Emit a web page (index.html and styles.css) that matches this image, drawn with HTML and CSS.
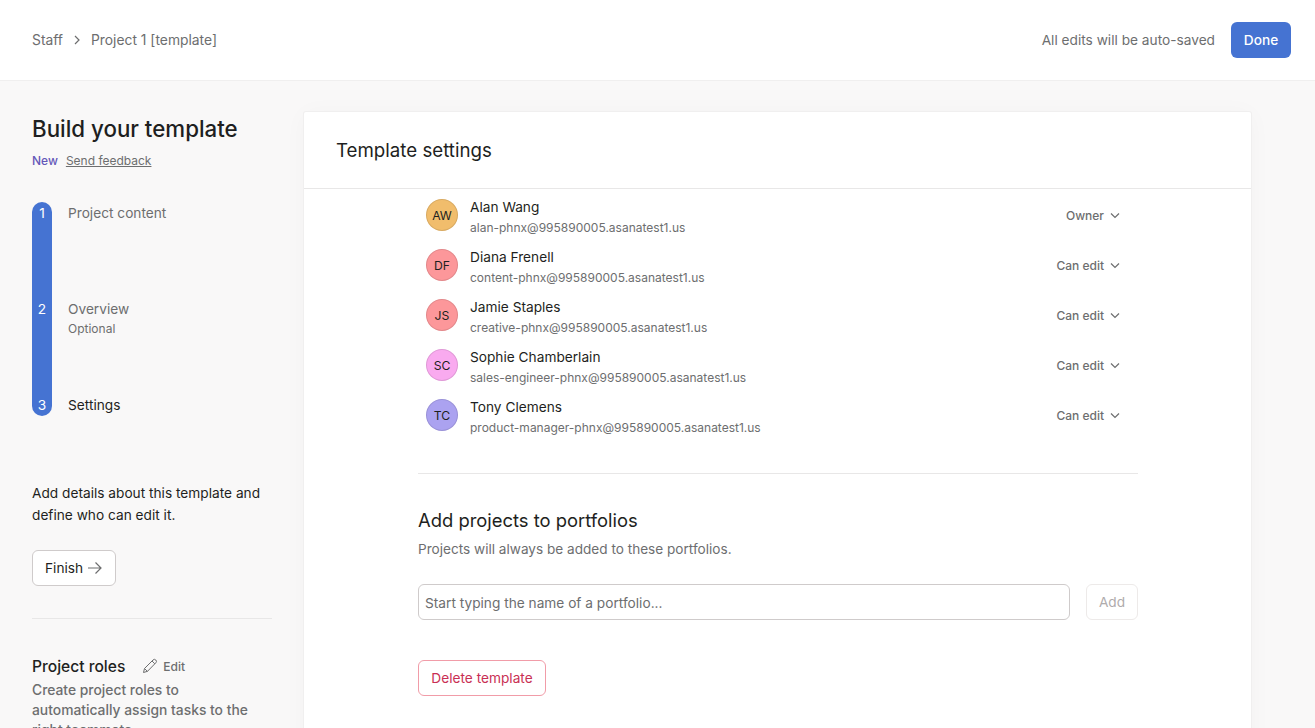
FILE: index.html
```html
<!DOCTYPE html>
<html lang="en">
<head>
<meta charset="utf-8">
<title>Project 1 [template]</title>
<link rel="stylesheet" href="styles.css">
</head>
<body>
<header class="topbar">
  <nav class="crumbs">
    <span>Staff</span>
    <svg class="crumb-icon" viewBox="0 0 10 10" width="10" height="10"><path d="M3 1l4 4-4 4" fill="none" stroke="#6d6e6f" stroke-width="1.2"/></svg>
    <span>Project 1 [template]</span>
  </nav>
  <div class="top-actions">
    <span>All edits will be auto-saved</span>
    <button class="btn-done">Done</button>
  </div>
</header>
<div class="main">
  <aside class="sidebar">
    <h1 class="side-title">Build your template</h1>
    <div class="side-meta"><span class="new">New</span><a class="feedback">Send feedback</a></div>
    <div class="stepper">
      <div class="track"><span>1</span><span>2</span><span>3</span></div>
      <div class="steps">
        <div class="step">Project content</div>
        <div class="step">Overview<small>Optional</small></div>
        <div class="step current">Settings</div>
      </div>
    </div>
    <p class="side-desc">Add details about this template and define who can edit it.</p>
    <button class="btn-finish">Finish
      <svg viewBox="0 0 16 16" width="16" height="16"><path d="M1 8h13M8.500 2.500L14 8l-5.500 5.500" fill="none" stroke="#6d6e6f" stroke-width="1.200"/></svg>
    </button>
    <hr class="side-rule">
    <div class="roles-head">
      <h2>Project roles</h2>
      <span class="edit">
        <svg viewBox="0 0 16 16" width="16" height="16"><path d="M1.500 14.500l1-4L11 2a1.800 1.800 0 0 1 2.800 2.800L5.500 13.300zM2.500 10.500l3 3M10 3l2.800 2.800" fill="none" stroke="#6d6e6f" stroke-width="1"/></svg>
        Edit
      </span>
    </div>
    <p class="roles-desc">Create project roles to automatically assign tasks to the right teammate</p>
  </aside>
  <section class="card">
    <h2 class="card-title">Template settings</h2>
    <div class="card-body">
      <ul class="members">
        <li class="member"><span class="avatar a-orange">AW</span><div class="who"><div class="name">Alan Wang</div><div class="mail">alan-phnx@995890005.asanatest1.us</div></div><span class="perm">Owner<svg viewBox="0 0 10 10" width="10" height="10"><path d="M1 3.500l4 4 4-4" fill="none" stroke="#6d6e6f" stroke-width="1.200"/></svg></span></li>
        <li class="member"><span class="avatar a-red">DF</span><div class="who"><div class="name">Diana Frenell</div><div class="mail">content-phnx@995890005.asanatest1.us</div></div><span class="perm">Can edit<svg viewBox="0 0 10 10" width="10" height="10"><path d="M1 3.500l4 4 4-4" fill="none" stroke="#6d6e6f" stroke-width="1.200"/></svg></span></li>
        <li class="member"><span class="avatar a-red">JS</span><div class="who"><div class="name">Jamie Staples</div><div class="mail">creative-phnx@995890005.asanatest1.us</div></div><span class="perm">Can edit<svg viewBox="0 0 10 10" width="10" height="10"><path d="M1 3.500l4 4 4-4" fill="none" stroke="#6d6e6f" stroke-width="1.200"/></svg></span></li>
        <li class="member"><span class="avatar a-pink">SC</span><div class="who"><div class="name">Sophie Chamberlain</div><div class="mail">sales-engineer-phnx@995890005.asanatest1.us</div></div><span class="perm">Can edit<svg viewBox="0 0 10 10" width="10" height="10"><path d="M1 3.500l4 4 4-4" fill="none" stroke="#6d6e6f" stroke-width="1.200"/></svg></span></li>
        <li class="member"><span class="avatar a-purple">TC</span><div class="who"><div class="name">Tony Clemens</div><div class="mail">product-manager-phnx@995890005.asanatest1.us</div></div><span class="perm">Can edit<svg viewBox="0 0 10 10" width="10" height="10"><path d="M1 3.500l4 4 4-4" fill="none" stroke="#6d6e6f" stroke-width="1.200"/></svg></span></li>
      </ul>
      <hr class="body-rule">
      <h3 class="sec-title">Add projects to portfolios</h3>
      <p class="sec-desc">Projects will always be added to these portfolios.</p>
      <div class="add-row">
        <div class="field">Start typing the name of a portfolio...</div>
        <button class="btn-add">Add</button>
      </div>
      <button class="btn-delete">Delete template</button>
    </div>
  </section>
</div>
</body>
</html>
```
FILE: styles.css
```css
* { box-sizing: border-box; }
html, body { margin: 0; height: 100%; overflow: hidden; }
body {
  font-family: Inter, "Noto Sans", sans-serif;
  background: #f9f8f8;
  color: #1e1f21;
  font-size: 13.700px;
}
h1, h2, h3, p, ul { margin: 0; padding: 0; }
button { font-family: inherit; cursor: pointer; }

.topbar {
  height: 81px;
  background: #fff;
  border-bottom: 1px solid #f0efef;
  display: flex;
  align-items: center;
  justify-content: space-between;
  padding: 0 24px 1px 32px;
  color: #6d6e6f;
  line-height: 20px;
}
.crumbs { display: flex; align-items: center; font-size: 13.850px; }
.crumb-icon { margin: 0 9px 0 9px; }
.top-actions { display: flex; align-items: center; gap: 16px; }
.btn-done {
  width: 60px;
  height: 36px;
  border: 0;
  border-radius: 6px;
  background: #4573d2;
  color: #fff;
  font-size: 13.700px;
  font-weight: 500;
  padding: 0;
}

.main { display: flex; align-items: flex-start; height: 647px; padding-top: 31px; padding-left: 32px; }

.sidebar { width: 240px; margin-right: 32px; flex: none; padding-top: 1px; }
.side-title { font-size: 22.300px; font-weight: 500; line-height: 32px; color: #1e1f21; }
.side-meta { display: flex; gap: 8px; font-size: 12px; line-height: 16px; margin-top: 8px; }
.new { color: #6457b8; font-weight: 500; }
.feedback { color: #6d6e6f; text-decoration: underline; }

.stepper { display: flex; gap: 16px; margin-top: 33px; }
.track {
  width: 20px;
  height: 214px;
  background: #4573d2;
  border-radius: 10px;
  color: #fff;
  padding: 1px 0;
  display: flex;
  flex-direction: column;
  justify-content: space-between;
  align-items: center;
  line-height: 20px;
}
.steps { display: flex; flex-direction: column; padding-top: 1px; }
.step { height: 96px; line-height: 20px; color: #6d6e6f; }
.step small { display: block; font-size: 12px; line-height: 20px; }
.step.current { color: #1e1f21; height: 20px; }

.side-desc { margin-top: 66px; line-height: 22px; color: #1e1f21; }
.btn-finish {
  display: flex;
  align-items: center;
  gap: 4px;
  margin-top: 24px;
  height: 36px;
  width: 84px;
  padding: 0 0 0 12px;
  background: #fff;
  border: 1px solid #cfcbcb;
  border-radius: 6px;
  color: #1e1f21;
  font-size: 13.700px;
}
.side-rule { border: 0; border-top: 1px solid #e8e7e7; margin: 32px 0 0; }
.roles-head { display: flex; align-items: center; margin-top: 36px; height: 22px; }
.roles-head h2 { font-size: 15.600px; font-weight: 500; line-height: 22px; padding-top: 1px; margin-right: 17px; }
.edit { display: flex; align-items: center; gap: 5px; font-size: 12px; color: #6d6e6f; font-weight: 500; }
.roles-desc { margin-top: 3px; max-width: 228px; line-height: 20px; font-size: 13.850px; color: #6d6e6f; font-weight: 500; }

.card {
  width: 947px;
  height: 700px;
  flex: none;
  background: #fff;
  border-radius: 2px;
  box-shadow: 0 0 0 1px #f0efef, 0 2px 24px rgba(0,0,0,0.03);
}
.card-title {
  height: 77px;
  border-bottom: 1px solid #e8e7e7;
  padding: 24px 32px 0;
  font-size: 18.700px;
  font-weight: 400;
  line-height: 30px;
}
.card-body { width: 720px; margin-left: 114px; }

.members { list-style: none; margin-top: 1px; }
.member { display: flex; align-items: center; height: 50px; padding: 0 8px; }
.avatar {
  width: 32px;
  height: 32px;
  border-radius: 50%;
  display: flex;
  align-items: center;
  justify-content: center;
  font-size: 12.200px;
  color: #1e1f21;
  flex: none;
  margin-right: 12px;
  box-shadow: inset 0 0 0 1px rgba(0,0,0,0.1);
}
.a-orange { background: #f1bd6c; }
.a-red { background: #fc979a; }
.a-pink { background: #f9aaef; }
.a-purple { background: #aba2f0; }
.who { flex: 1; padding-top: 5px; }
.name { line-height: 20px; color: #1e1f21; }
.mail { font-size: 12px; line-height: 20px; color: #6d6e6f; margin-top: 1px; }
.perm { display: flex; align-items: center; gap: 6px; font-size: 12px; font-weight: 500; color: #6d6e6f; margin-right: 10px; }

.body-rule { border: 0; border-top: 1px solid #e8e7e7; margin: 33px 0 0; }
.sec-title { margin-top: 32px; font-size: 18.400px; font-weight: 400; line-height: 28px; }
.sec-desc { margin-top: 5px; line-height: 20px; font-size: 13.600px; color: #6d6e6f; }
.add-row { display: flex; gap: 16px; margin-top: 25px; }
.field {
  flex: 1;
  height: 36px;
  border: 1px solid #cfcbcb;
  border-radius: 6px;
  padding: 1px 6px 0;
  line-height: 35px;
  color: #6d6e6f;
}
.btn-add {
  width: 52px;
  height: 36px;
  background: #fff;
  border: 1px solid #edeae9;
  border-radius: 6px;
  color: #afabac;
  font-size: 13.700px;
  padding: 0;
}
.btn-delete {
  display: block;
  margin-top: 40px;
  width: 128px;
  height: 36px;
  background: #fff;
  border: 1px solid #f19ca8;
  border-radius: 6px;
  color: #c92f54;
  font-size: 13.700px;
  padding: 0;
}
```
